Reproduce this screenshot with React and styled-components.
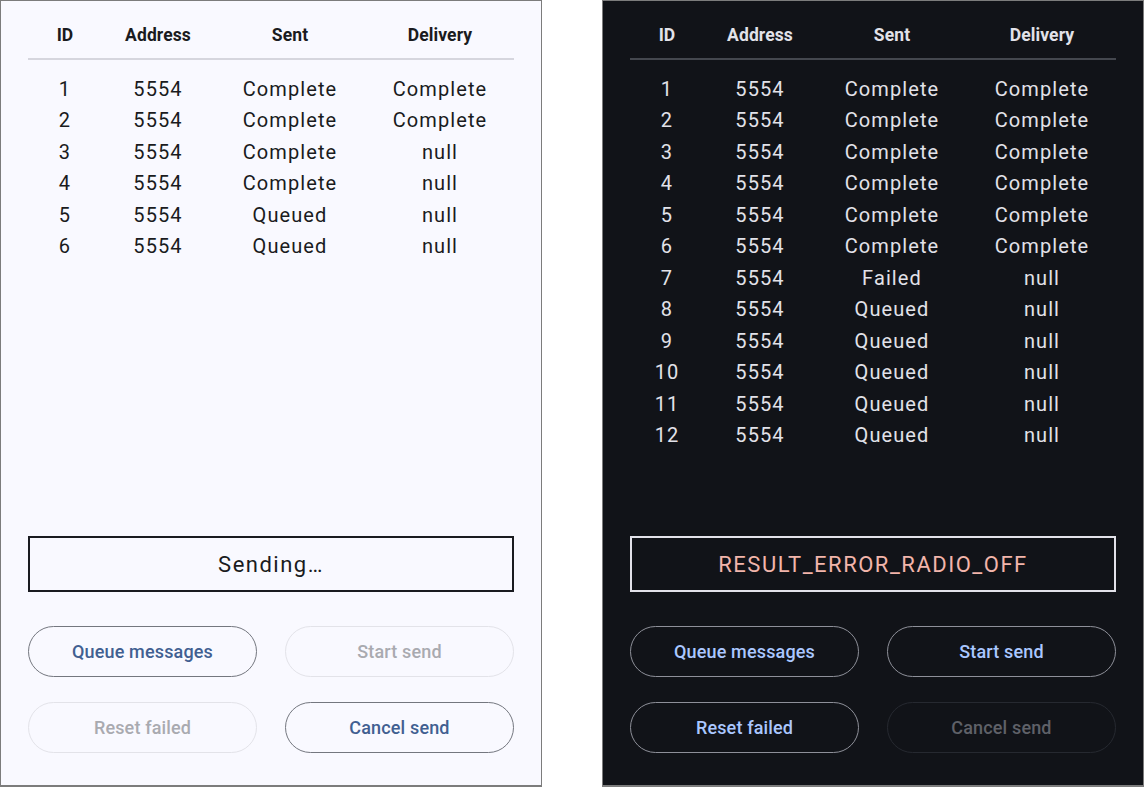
import React from "react";
import styled, { createGlobalStyle, ThemeProvider } from "styled-components";

const light = {
  bg: "#f9f9ff",
  text: "#1a1b20",
  divider: "#d6d6de",
  statusBorder: "#1a1b20",
  statusText: "#1a1b20",
  outline: "#74777f",
  primary: "#415f91",
  disabledBorder: "#e3e3e9",
  disabledText: "#a9aab0",
};

const dark = {
  bg: "#111318",
  text: "#e2e2e9",
  divider: "#44474e",
  statusBorder: "#e2e2e9",
  statusText: "#f2b5ab",
  outline: "#8e9099",
  primary: "#aac7ff",
  disabledBorder: "#262930",
  disabledText: "#5f6168",
};

const lightRows = [
  [1, "5554", "Complete", "Complete"],
  [2, "5554", "Complete", "Complete"],
  [3, "5554", "Complete", "null"],
  [4, "5554", "Complete", "null"],
  [5, "5554", "Queued", "null"],
  [6, "5554", "Queued", "null"],
];

const darkRows = [
  [1, "5554", "Complete", "Complete"],
  [2, "5554", "Complete", "Complete"],
  [3, "5554", "Complete", "Complete"],
  [4, "5554", "Complete", "Complete"],
  [5, "5554", "Complete", "Complete"],
  [6, "5554", "Complete", "Complete"],
  [7, "5554", "Failed", "null"],
  [8, "5554", "Queued", "null"],
  [9, "5554", "Queued", "null"],
  [10, "5554", "Queued", "null"],
  [11, "5554", "Queued", "null"],
  [12, "5554", "Queued", "null"],
];

const GlobalStyle = createGlobalStyle`
  * { box-sizing: border-box; }
  body {
    margin: 0;
    background: #fff;
    font-family: Roboto, "Liberation Sans", sans-serif;
  }
`;

const Page = styled.div`
  display: flex;
  justify-content: space-between;
  width: 1144px;
  height: 787px;
`;

const Panel = styled.div`
  width: 542px;
  height: 787px;
  display: flex;
  flex-direction: column;
  padding: 19px 27px 32px;
  background: ${(p) => p.theme.bg};
  color: ${(p) => p.theme.text};
  border: 1px solid #7c7c7c;
  border-bottom-width: 2px;
`;

const Table = styled.div`
  flex: 1;
`;

const Grid = styled.div`
  display: grid;
  grid-template-columns: 74px 112px 152px 148px;
`;

const HeaderRow = styled(Grid)`
  height: 30px;
  align-items: center;
  font-size: 17.5px;
  font-weight: 700;
  letter-spacing: 0.1px;
`;

const Divider = styled.div`
  height: 2px;
  margin: 8px 0 13px;
  background: ${(p) => p.theme.divider};
`;

const Row = styled(Grid)`
  height: 31.5px;
  align-items: center;
  font-size: 20px;
  letter-spacing: 1.1px;
`;

const Cell = styled.div`
  text-align: center;
`;

const Status = styled.div`
  height: 56px;
  display: flex;
  align-items: center;
  justify-content: center;
  border: 2px solid ${(p) => p.theme.statusBorder};
  color: ${(p) => p.theme.statusText};
  font-size: 22px;
  letter-spacing: 1.5px;
  margin-bottom: 34px;
`;

const ButtonGrid = styled.div`
  display: grid;
  grid-template-columns: 1fr 1fr;
  column-gap: 28px;
  row-gap: 25px;
`;

const OutlineButton = styled.button`
  height: 51px;
  border-radius: 26px;
  background: transparent;
  font-family: Roboto, "Liberation Sans", sans-serif;
  font-size: 18px;
  font-weight: 500;
  letter-spacing: 0.15px;
  border: 1.5px solid
    ${(p) => (p.disabled ? p.theme.disabledBorder : p.theme.outline)};
  color: ${(p) => (p.disabled ? p.theme.disabledText : p.theme.primary)};
`;

function SmsPanel({ rows, status, disabled }) {
  return (
    <Panel>
      <Table>
        <HeaderRow>
          <Cell>ID</Cell>
          <Cell>Address</Cell>
          <Cell>Sent</Cell>
          <Cell>Delivery</Cell>
        </HeaderRow>
        <Divider />
        {rows.map((r) => (
          <Row key={r[0]}>
            {r.map((v, i) => (
              <Cell key={i}>{v}</Cell>
            ))}
          </Row>
        ))}
      </Table>
      <Status>{status}</Status>
      <ButtonGrid>
        <OutlineButton disabled={disabled.includes("queue")}>
          Queue messages
        </OutlineButton>
        <OutlineButton disabled={disabled.includes("start")}>
          Start send
        </OutlineButton>
        <OutlineButton disabled={disabled.includes("reset")}>
          Reset failed
        </OutlineButton>
        <OutlineButton disabled={disabled.includes("cancel")}>
          Cancel send
        </OutlineButton>
      </ButtonGrid>
    </Panel>
  );
}

export default function App() {
  return (
    <>
      <GlobalStyle />
      <Page>
        <ThemeProvider theme={light}>
          <SmsPanel
            rows={lightRows}
            status="Sending…"
            disabled={["start", "reset"]}
          />
        </ThemeProvider>
        <ThemeProvider theme={dark}>
          <SmsPanel
            rows={darkRows}
            status="RESULT_ERROR_RADIO_OFF"
            disabled={["cancel"]}
          />
        </ThemeProvider>
      </Page>
    </>
  );
}
